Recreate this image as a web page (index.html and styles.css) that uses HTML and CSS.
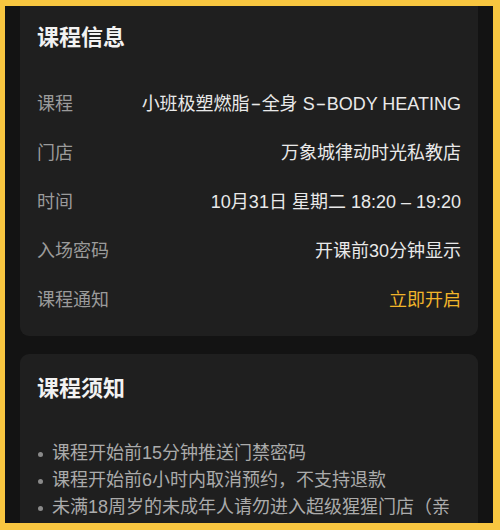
FILE: index.html
```html
<!DOCTYPE html>
<html lang="zh-CN">
<head>
<meta charset="utf-8">
<link rel="stylesheet" href="styles.css">
</head>
<body>
<div class="screen">
  <section class="card info">
    <h2 class="card-title">课程信息</h2>
    <div class="rows">
      <div class="row"><span class="label">课程</span><span class="value">小班极塑燃脂<span class="hy">-</span>全身 S<span class="hy">-</span>BODY HEATING</span></div>
      <div class="row"><span class="label">门店</span><span class="value">万象城律动时光私教店</span></div>
      <div class="row"><span class="label">时间</span><span class="value">10月31日 星期二 18:20 – 19:20</span></div>
      <div class="row"><span class="label">入场密码</span><span class="value">开课前30分钟显示</span></div>
      <div class="row"><span class="label">课程通知</span><span class="value link">立即开启</span></div>
    </div>
  </section>
  <section class="card notice">
    <h2 class="card-title">课程须知</h2>
    <ul class="notes">
      <li>课程开始前15分钟推送门禁密码</li>
      <li>课程开始前6小时内取消预约，不支持退款</li>
      <li>未满18周岁的未成年人请勿进入超级猩猩门店（亲子课程除外）</li>
    </ul>
  </section>
</div>
</body>
</html>
```
FILE: styles.css
```css
html, body {
  margin: 0;
  padding: 0;
}
body {
  background: #f8c640;
  width: 500px;
  height: 530px;
  overflow: hidden;
  font-family: "Liberation Sans", "Noto Sans CJK SC", sans-serif;
}
.screen {
  margin: 6px 7px 0 5px;
  height: 517px;
  background: #131313;
  padding: 0 15px;
  overflow: hidden;
  display: flex;
  flex-direction: column;
  gap: 18px;
}
.card {
  background: #1f1f1f;
  border-radius: 9px;
  padding: 0 17px;
  flex-shrink: 0;
}
.card-title {
  margin: 0;
  font-size: 22px;
  line-height: 30px;
  font-weight: 700;
  color: #f2f2f2;
}
.info {
  padding-top: 17px;
  padding-bottom: 14px;
  border-top-left-radius: 0;
  border-top-right-radius: 0;
}
.rows {
  margin-top: 24px;
  display: flex;
  flex-direction: column;
}
.row {
  height: 49px;
  display: flex;
  align-items: center;
  justify-content: space-between;
  font-size: 18px;
}
.label {
  color: #9b9b9b;
}
.value {
  color: #e9e9e9;
}
.hy {
  display: inline-block;
  transform: scaleX(1.8);
  margin: 0 3px;
}
.link {
  color: #f2b52a;
}
.notice {
  padding-top: 20px;
  padding-bottom: 20px;
}
.notes {
  list-style: none;
  margin: 36px 0 0;
  padding: 0;
}
.notes li {
  position: relative;
  padding-left: 15px;
  font-size: 18px;
  line-height: 27px;
  color: #ababab;
}
.notes li::before {
  content: "";
  position: absolute;
  left: 1px;
  top: 12px;
  width: 5px;
  height: 5px;
  border-radius: 50%;
  background: #8a8a8a;
}
```
